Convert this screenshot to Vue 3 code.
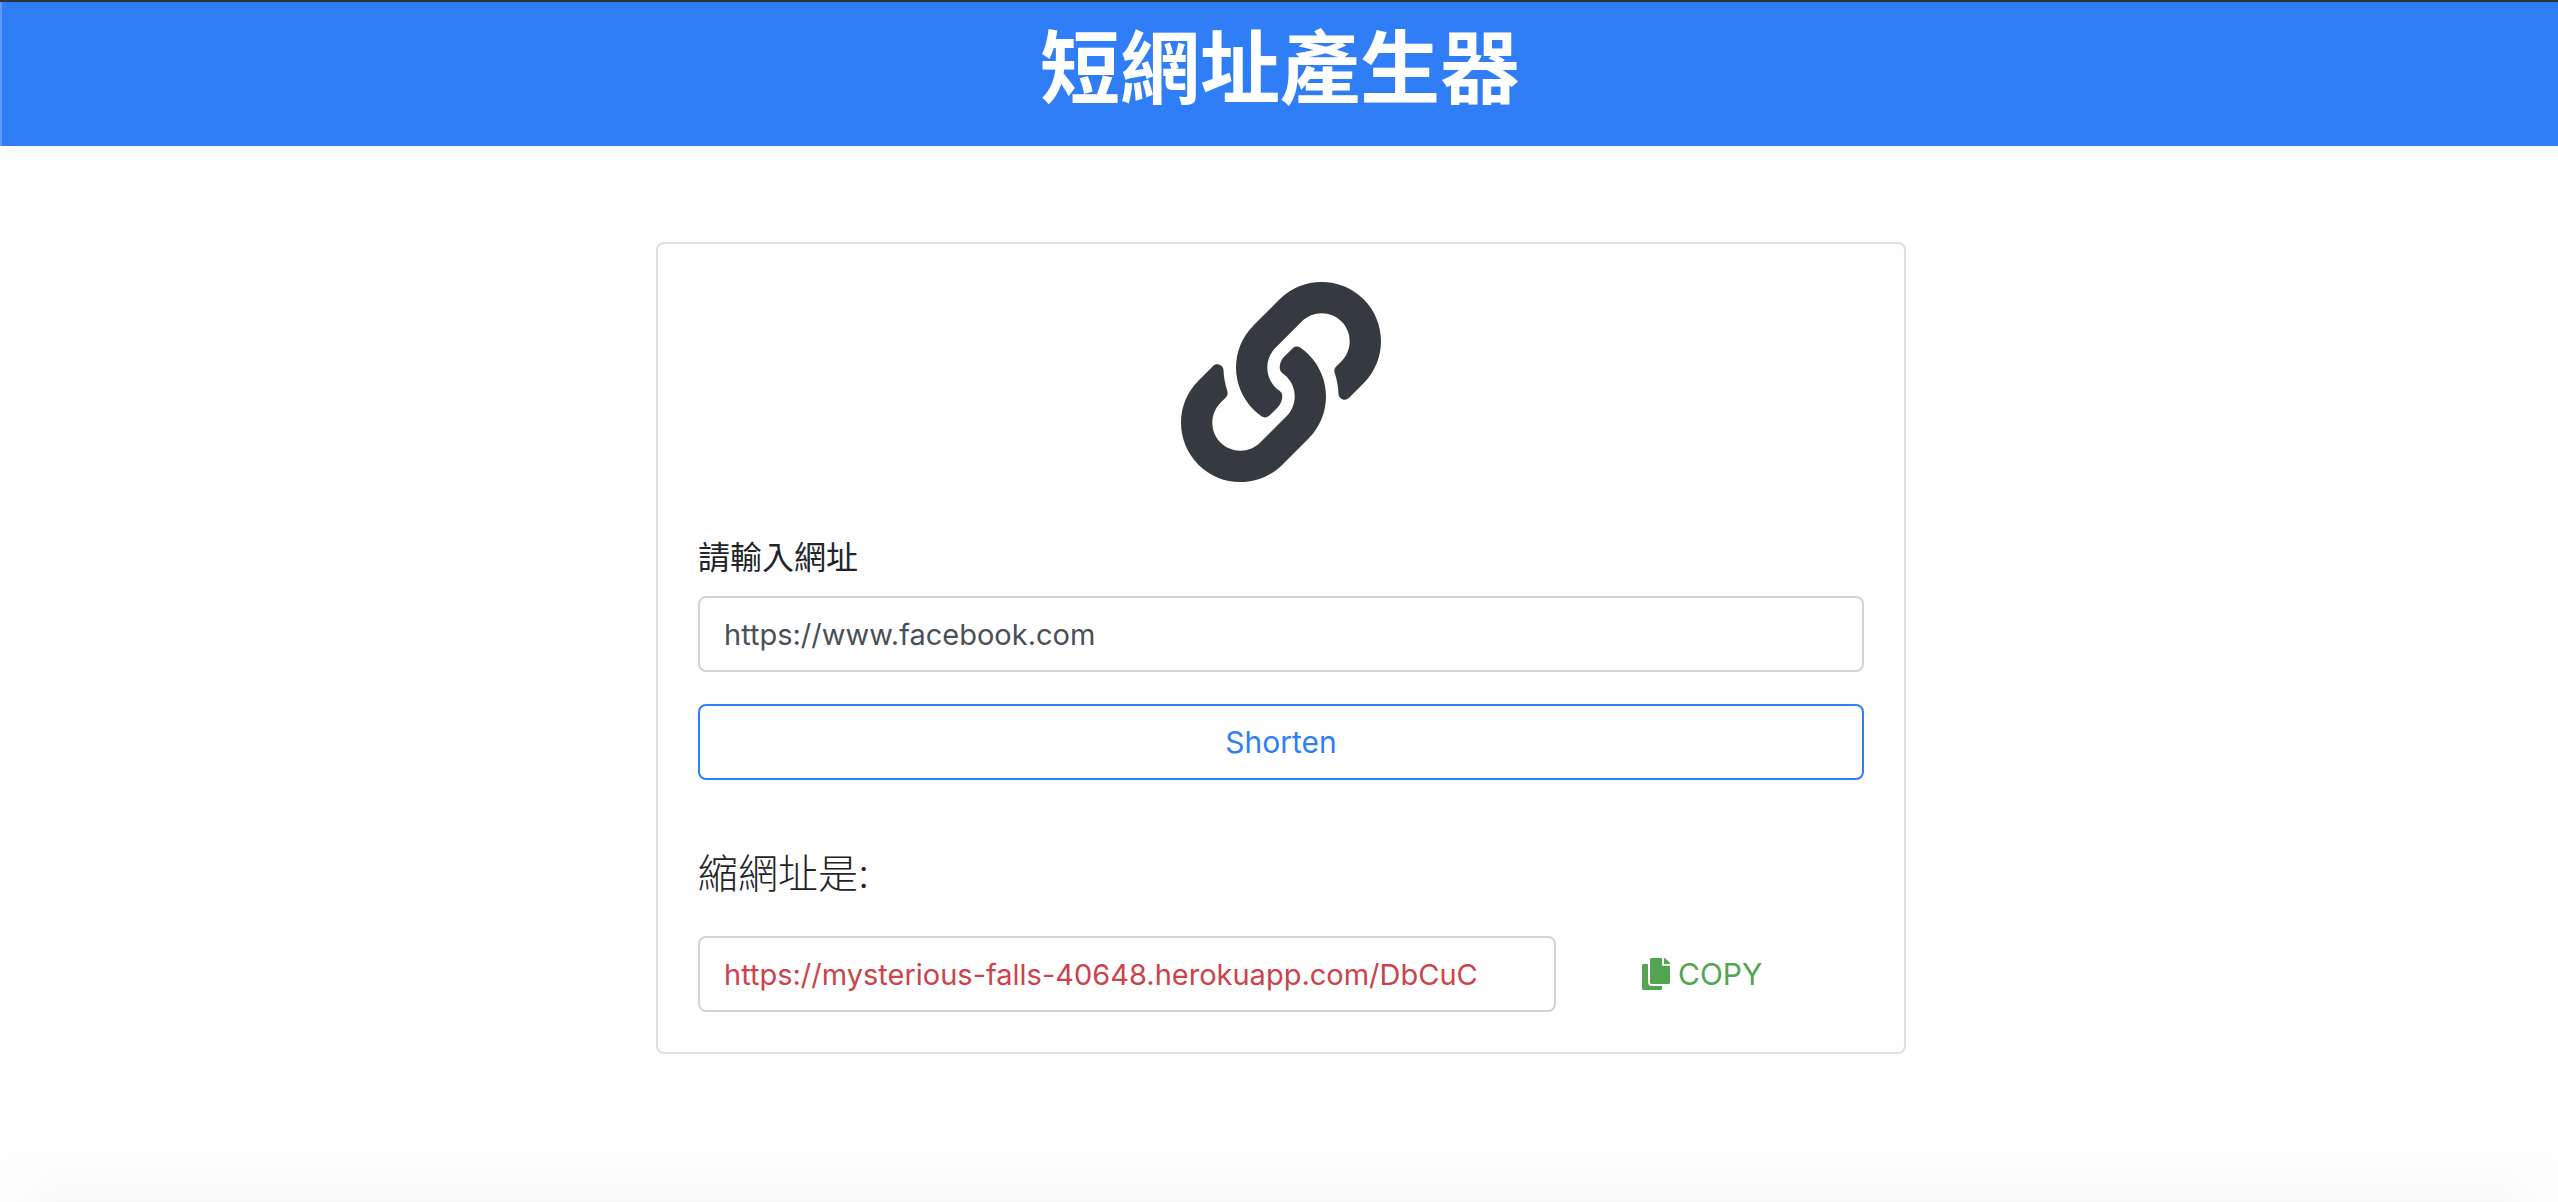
<script setup>
import { ref } from 'vue'

const url = ref('https://www.facebook.com')
const shortUrl = ref('https://mysterious-falls-40648.herokuapp.com/DbCuC')
</script>

<template>
  <div class="page">
    <header class="banner">
      <h1>短網址產生器</h1>
    </header>
    <main class="card">
      <svg class="link-icon" viewBox="0 0 512 512" aria-hidden="true">
        <path d="M326.612 185.391c59.747 59.809 58.927 155.698.36 214.59-.11.12-.24.25-.36.37l-67.2 67.2c-59.27 59.27-155.699 59.262-214.96 0-59.27-59.26-59.27-155.7 0-214.96l37.106-37.106c9.84-9.84 26.786-3.3 27.294 10.606.648 17.722 3.826 35.527 9.69 52.721 1.986 5.822.567 12.262-3.783 16.612l-13.087 13.087c-28.026 28.026-28.905 73.66-1.155 101.96 28.024 28.579 74.086 28.749 102.325.51l67.2-67.19c28.191-28.191 28.073-73.757 0-101.83-3.701-3.694-7.429-6.564-10.341-8.569a16.037 16.037 0 0 1-6.947-12.606c-.396-10.567 3.348-21.456 11.698-29.806l21.054-21.055c5.521-5.521 14.182-6.199 20.584-1.731a152.482 152.482 0 0 1 20.522 17.197zM467.547 44.449c-59.261-59.262-155.69-59.27-214.96 0l-67.2 67.2c-.12.12-.25.25-.36.37-58.566 58.892-59.387 154.781.36 214.59a152.454 152.454 0 0 0 20.521 17.196c6.402 4.468 15.064 3.789 20.584-1.731l21.054-21.055c8.35-8.35 12.094-19.239 11.698-29.806a16.037 16.037 0 0 0-6.947-12.606c-2.912-2.005-6.64-4.875-10.341-8.569-28.073-28.073-28.191-73.639 0-101.83l67.2-67.19c28.239-28.239 74.3-28.069 102.325.51 27.75 28.3 26.872 73.934-1.155 101.96l-13.087 13.087c-4.35 4.35-5.769 10.79-3.783 16.612 5.864 17.194 9.042 34.999 9.69 52.721.509 13.906 17.454 20.446 27.294 10.606l37.106-37.106c59.271-59.259 59.271-155.699.001-214.959z" />
      </svg>
      <form @submit.prevent>
        <label class="url-label" for="url">請輸入網址</label>
        <input id="url" v-model="url" class="field" type="text" />
        <button class="shorten" type="submit">Shorten</button>
      </form>
      <label class="result-label" for="short-url">縮網址是:</label>
      <div class="result">
        <input id="short-url" class="field short" type="text" :value="shortUrl" readonly />
        <button class="copy" type="button">
          <svg class="copy-icon" viewBox="0 0 448 512" aria-hidden="true">
            <path d="M320 448v40c0 13.255-10.745 24-24 24H24c-13.255 0-24-10.745-24-24V120c0-13.255 10.745-24 24-24h72v296c0 30.879 25.121 56 56 56h168zm0-344V0H152c-13.255 0-24 10.745-24 24v368c0 13.255 10.745 24 24 24h272c13.255 0 24-10.745 24-24V128H344c-13.2 0-24-10.8-24-24zm120.971-31.029L375.029 7.029A24 24 0 0 0 358.059 0H352v96h96v-6.059a24 24 0 0 0-7.029-16.97z" />
          </svg>
          <span>COPY</span>
        </button>
      </div>
    </main>
    <div class="shade"></div>
  </div>
</template>

<style>
body {
  background: #fefefe;
}
</style>

<style scoped>
.page,
.page * {
  box-sizing: border-box;
}

.page {
  display: flex;
  flex-direction: column;
  align-items: center;
  min-height: 100vh;
  color: #212529;
  font-family: Inter, "Noto Sans CJK TC", sans-serif;
}

.banner {
  width: 100%;
  padding-left: 2px;
  border-top: 2px solid #2d3339;
  background: linear-gradient(to right, #5e9bf8 2px, #2f7ef8 2px);
}

h1 {
  margin: 0;
  padding-bottom: 24px;
  color: #fff;
  font-family: "Noto Sans CJK TC", sans-serif;
  font-size: 80px;
  font-weight: 700;
  line-height: 120px;
  text-align: center;
}

.card {
  display: flex;
  flex-direction: column;
  width: 100%;
  max-width: 1250px;
  margin-top: 96px;
  margin-left: 4px;
  padding: 38px 40px 40px;
  border: 2px solid #dfdfdf;
  border-radius: 8px;
}

.link-icon {
  align-self: center;
  width: 200px;
  height: 200px;
  fill: #343a40;
}

form {
  display: flex;
  flex-direction: column;
  margin-top: 52px;
}

.url-label {
  margin-bottom: 14px;
  font-size: 32px;
  font-weight: 400;
  line-height: 48px;
}

.field {
  width: 100%;
  height: 76px;
  padding: 0 24px;
  border: 2px solid #ced4da;
  border-radius: 8px;
  background: #fff;
  color: #495057;
  font-family: inherit;
  font-size: 29px;
}

.shorten {
  height: 76px;
  margin-top: 32px;
  border: 2px solid #2f7ef8;
  border-radius: 8px;
  background: #fff;
  color: #2f7ef8;
  font-family: inherit;
  font-size: 30px;
}

.result-label {
  margin-top: 64px;
  font-size: 40px;
  font-weight: 300;
  line-height: 60px;
}

.result {
  display: grid;
  grid-template-columns: 858fr 278fr;
  gap: 30px;
  margin-top: 32px;
}

.field.short {
  color: #cb444a;
}

.copy {
  display: flex;
  align-items: center;
  gap: 8px;
  padding: 0 56px;
  border: 0;
  background: none;
  color: #53a551;
  font-family: inherit;
  font-size: 30px;
}

.copy-icon {
  width: 28px;
  height: 32px;
  fill: currentColor;
}

.shade {
  width: 100%;
  height: 48px;
  margin-top: auto;
  background:
    linear-gradient(to right, #fefefe, transparent 60px, transparent calc(100% - 60px), #fefefe),
    linear-gradient(#fefefe, #f9f9f9);
}
</style>
